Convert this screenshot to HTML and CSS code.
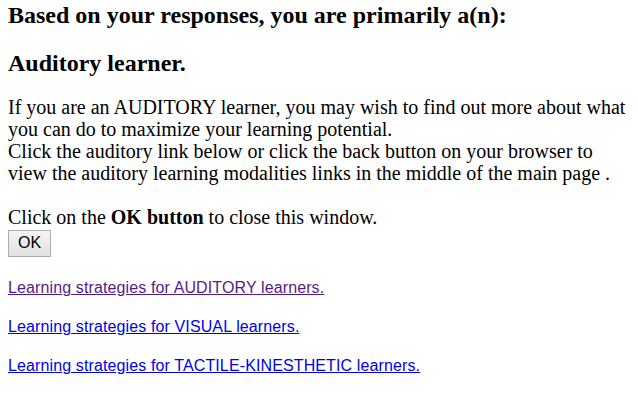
FILE: index.html
```html
<!DOCTYPE html>
<html>
<head>
<meta charset="utf-8">
<link rel="stylesheet" href="styles.css">
</head>
<body class="page">
<h3 class="title">Based on your responses, you are primarily a(n):</h3>
<h3 class="title second">Auditory learner.</h3>
<p class="text">If you are an AUDITORY learner, you may wish to find out more about what you can do to maximize your learning potential.<br>Click the auditory link below or click the back button on your browser to view the auditory learning modalities links in the middle of the main page .<br><br>Click on the <b>OK button</b> to close this window.</p>
<div class="actions"><button class="ok" type="button">OK</button></div>
<p class="link-row first"><a class="link visited" href="#">Learning strategies for AUDITORY learners.</a></p>
<p class="link-row"><a class="link" href="#">Learning strategies for VISUAL learners.</a></p>
<p class="link-row"><a class="link" href="#">Learning strategies for TACTILE-KINESTHETIC learners.</a></p>
</body>
</html>
```
FILE: styles.css
```css
html, body { background: #fff; }
.page {
  margin: 3px 8px 8px 8px;
  font-family: "Liberation Serif", "Times New Roman", serif;
  font-size: 20px;
  color: #000;
}
.title {
  font-size: 24px;
  font-weight: bold;
  margin: 0;
  line-height: 24px;
}
.title.second {
  margin-top: 24px;
}
.text {
  margin: 21px 0 0 0;
  line-height: 22px;
}
.actions {
  margin-top: 2px;
}
.ok {
  font-family: "Liberation Sans", Arial, sans-serif;
  font-size: 16px;
  line-height: 18px;
  padding: 3px 9px 4px;
  margin: 0;
  border: 1px solid #adadad;
  background: linear-gradient(#f4f4f4, #e2e2e2);
  border-radius: 0;
  color: #000;
}
.link-row {
  margin: 21px 0 0 0;
  font-family: "Liberation Sans", Arial, sans-serif;
  font-size: 16px;
  line-height: 18px;
  letter-spacing: 0.12px;
}
.link-row.first { margin-top: 22px; }
.link { color: #0000ee; }
.link.visited { color: #551a8b; }
```
